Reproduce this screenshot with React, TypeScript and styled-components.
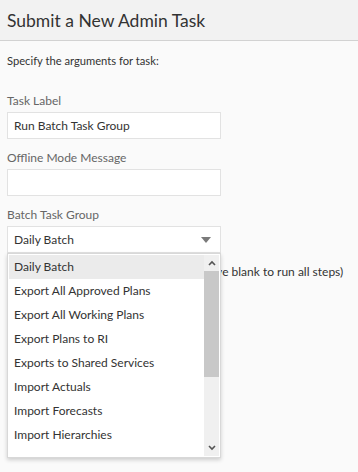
import styled, { createGlobalStyle } from "styled-components";

const GlobalStyle = createGlobalStyle`
  html, body {
    margin: 0;
    padding: 0;
    background: #fafafa;
    font-family: Lato, "Open Sans", sans-serif;
  }
`;

const options = [
  "Daily Batch",
  "Export All Approved Plans",
  "Export All Working Plans",
  "Export Plans to RI",
  "Exports to Shared Services",
  "Import Actuals",
  "Import Forecasts",
  "Import Hierarchies",
];

const App = () => {
  const selected = "Daily Batch";

  return (
    <StyledPage>
      <GlobalStyle />
      <StyledHeader>
        <h1>Submit a New Admin Task</h1>
      </StyledHeader>
      <StyledContent>
        <Intro>Specify the arguments for task:</Intro>
        <Field>
          <Label>Task Label</Label>
          <Input>Run Batch Task Group</Input>
        </Field>
        <Field>
          <Label>Offline Mode Message</Label>
          <Input />
        </Field>
        <Field>
          <Label>Batch Task Group</Label>
          <SelectWrap>
            <Input>
              {selected}
              <Caret viewBox="0 0 10 6">
                <path d="M0 0h10L5 6z" fill="#7a7a7a" />
              </Caret>
            </Input>
            <Dropdown>
              <OptionList>
                {options.map((o) => (
                  <Option key={o} $active={o === selected}>
                    {o}
                  </Option>
                ))}
              </OptionList>
              <ScrollBar>
                <ScrollArrow viewBox="0 0 8 6">
                  <path d="M1 5l3-3 3 3" fill="none" stroke="#555" strokeWidth="1.6" />
                </ScrollArrow>
                <ScrollTrack>
                  <ScrollThumb />
                </ScrollTrack>
                <ScrollArrow viewBox="0 0 8 6">
                  <path d="M1 1l3 3 3-3" fill="none" stroke="#555" strokeWidth="1.6" />
                </ScrollArrow>
              </ScrollBar>
            </Dropdown>
          </SelectWrap>
        </Field>
        <HelperRow>
          <HelperName>Batch Task Group Steps</HelperName>
          <span>(Leave blank to run all steps)</span>
        </HelperRow>
      </StyledContent>
    </StyledPage>
  );
};

const StyledPage = styled.div`
  width: 358px;
  min-height: 472px;
  background: #fafafa;
  color: #333;
`;
const StyledHeader = styled.header`
  height: 40px;
  background: #f2f2f2;
  border-bottom: 1px solid #d2d2d2;
  display: flex;
  align-items: center;
  padding-left: 7px;
  h1 {
    margin: 0;
    font-size: 17.5px;
    font-weight: 400;
    color: #333;
  }
`;
const StyledContent = styled.main`
  padding: 11px 7px 0;
  font-size: 12px;
`;
const Intro = styled.div`
  font-size: 11.2px;
  line-height: 18px;
  margin-bottom: 22px;
  color: #333;
`;
const Field = styled.div`
  margin-bottom: 10px;
`;
const Label = styled.div`
  line-height: 18px;
  margin-bottom: 2px;
  color: #666;
`;
const SelectWrap = styled.div`
  position: relative;
`;
const Input = styled.div`
  box-sizing: border-box;
  width: 214px;
  height: 27px;
  background: #fff;
  border: 1px solid #e2e2e2;
  display: flex;
  align-items: center;
  padding: 0 6px;
  color: #333;
`;
const Caret = styled.svg`
  width: 10px;
  height: 6px;
  margin-left: auto;
  margin-right: 3px;
`;
const Dropdown = styled.div`
  position: absolute;
  top: 100%;
  left: 0;
  box-sizing: border-box;
  width: 214px;
  height: 205px;
  background: #fff;
  border: 1px solid #d8d8d8;
  box-shadow: 0 2px 4px rgba(0, 0, 0, 0.18);
  display: flex;
  padding: 1px;
  z-index: 2;
`;
const OptionList = styled.div`
  flex: 1;
`;
const Option = styled.div<{ $active?: boolean }>`
  height: 24px;
  line-height: 24px;
  padding-left: 5px;
  background: ${(p) => (p.$active ? "#ebebeb" : "transparent")};
  color: #333;
  white-space: nowrap;
`;
const ScrollBar = styled.div`
  width: 15px;
  background: #f0f0f0;
  display: flex;
  flex-direction: column;
  align-items: center;
`;
const ScrollArrow = styled.svg`
  width: 8px;
  height: 6px;
  margin: 5px 0;
`;
const ScrollTrack = styled.div`
  flex: 1;
  width: 100%;
`;
const ScrollThumb = styled.div`
  height: 106px;
  background: #c8c8c8;
`;
const HelperRow = styled.div`
  display: flex;
  line-height: 18px;
  margin-top: 1px;
  color: #333;
  white-space: nowrap;
`;
const HelperName = styled.span`
  width: 188px;
  color: #666;
`;

export default App;
